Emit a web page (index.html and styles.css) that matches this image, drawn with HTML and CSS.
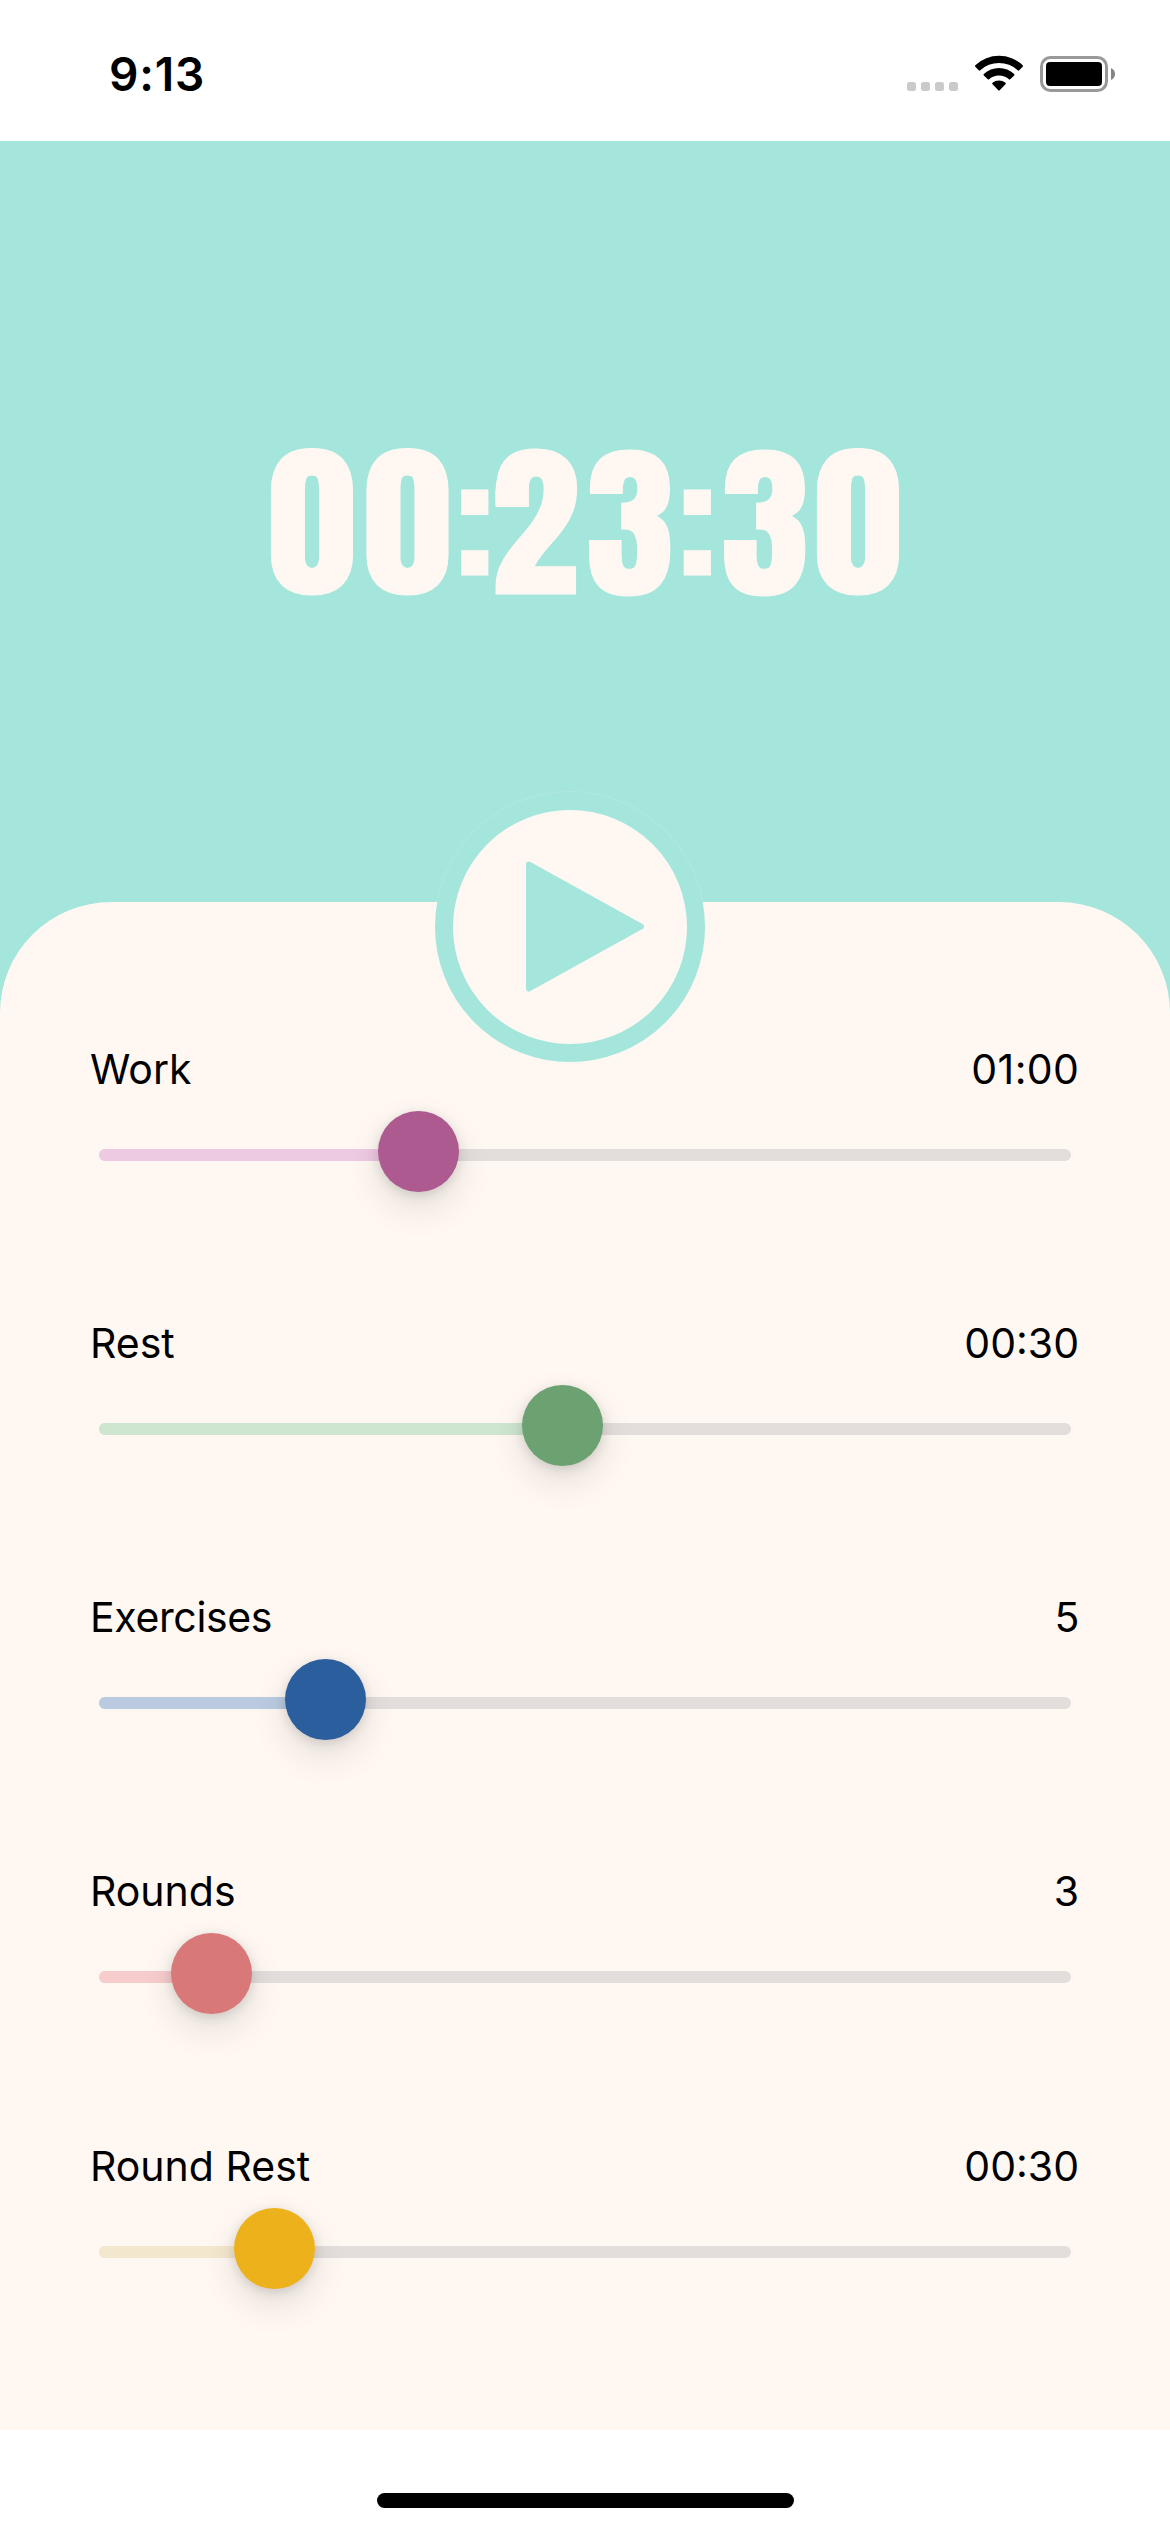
FILE: index.html
```html
<!DOCTYPE html>
<html lang="en">
<head>
<meta charset="utf-8">
<title>Workout timer</title>
<link rel="stylesheet" href="styles.css">
</head>
<body>
<div class="screen">
  <header class="status">
    <span class="clock">9:13</span>
    <svg class="status-icons" width="210" height="40" viewBox="906 54 210 40">
      <g fill="#cacaca"><rect x="907" y="82" width="9" height="9" rx="2.5"/><rect x="921" y="82" width="9" height="9" rx="2.5"/><rect x="935" y="82" width="9" height="9" rx="2.5"/><rect x="949" y="82" width="9" height="9" rx="2.5"/></g>
      <path d="M975.3 65.2Q974.6 66 975.3 66.7L979 70.4Q979.6 71 980.3 70.3A27.500 27.500 0 0 1 1017.700 70.300Q1018.400 71 1019 70.400L1022.700 66.700Q1023.400 66 1022.700 65.200A34.500 34.500 0 0 0 975.300 65.200Z"/>
      <path d="M983.8 74Q983.100 74.700 983.800 75.400L987.800 79.300Q988.400 79.900 989.100 79.300A15 15 0 0 1 1008.900 79.300Q1009.600 79.900 1010.200 79.300L1014.200 75.400Q1014.900 74.700 1014.200 74A22 22 0 0 0 983.800 74Z"/>
      <path d="M992.500 82.800Q991.800 83.500 992.500 84.200L998.300 90.300Q999 91 999.700 90.300L1005.500 84.200Q1006.200 83.500 1005.500 82.800A10 10 0 0 0 992.500 82.800Z"/>
      <rect x="1041.500" y="57.500" width="65" height="33" rx="9" fill="none" stroke="#999" stroke-width="3"/>
      <rect x="1046" y="62" width="56" height="24" rx="4"/>
      <path d="M1111 68Q1115 70 1115 74T1111 80Z" fill="#848484"/>
    </svg>
  </header>
  <main class="timer">
    <div class="total">0<span class="pair-end">0</span><span class="colon before-two">:</span>2<span class="pair-end">3</span><span class="colon">:</span><span class="pair-end">3</span><span class="last">0</span></div>
    <button class="play" aria-label="Start">
      <svg width="234" height="234" viewBox="0 0 234 234"><path d="M76 54.500L188 116.500L76 178.500Z" fill="#a4e6dc" stroke="#a4e6dc" stroke-width="6" stroke-linejoin="round"/></svg>
    </button>
    <section class="settings">
      <div class="setting work"><div class="caption"><span>Work</span><span>01:00</span></div><div class="slider"><div class="fill"></div><div class="knob"></div></div></div>
      <div class="setting rest"><div class="caption"><span>Rest</span><span>00:30</span></div><div class="slider"><div class="fill"></div><div class="knob"></div></div></div>
      <div class="setting exercises"><div class="caption"><span>Exercises</span><span>5</span></div><div class="slider"><div class="fill"></div><div class="knob"></div></div></div>
      <div class="setting rounds"><div class="caption"><span>Rounds</span><span>3</span></div><div class="slider"><div class="fill"></div><div class="knob"></div></div></div>
      <div class="setting round-rest"><div class="caption"><span>Round Rest</span><span>00:30</span></div><div class="slider"><div class="fill"></div><div class="knob"></div></div></div>
    </section>
  </main>
  <footer class="home"><div class="home-bar"></div></footer>
</div>
</body>
</html>
```
FILE: styles.css
```css
* { box-sizing: border-box; }

body {
  margin: 0;
  background: #fff;
  color: #000;
  font-family: Inter, "Liberation Sans", sans-serif;
}

.screen {
  display: flex;
  flex-direction: column;
  width: 1170px;
  height: 2532px;
}

.status {
  display: flex;
  justify-content: space-between;
  flex: none;
  height: 141px;
  padding: 54px 54px 0 109px;
}

.clock {
  font-size: 46px;
  font-weight: 600;
  letter-spacing: .8px;
  line-height: 40px;
}

.timer {
  position: relative;
  display: flex;
  flex-direction: column;
  height: 2289px;
  background: #a4e6dc;
}

.total {
  height: 761px;
  padding-top: 1px;
  color: #fff8f2;
  font-family: Impact, Anton, "Open Sans Condensed", sans-serif;
  font-size: 168px;
  letter-spacing: 7px;
  line-height: 761px;
  text-align: center;
  transform: scaleX(1.06);
  -webkit-text-stroke: 1px #fff8f2;
}

.pair-end { letter-spacing: 4.6px; }
.last { letter-spacing: 0; }

.colon {
  display: inline-block;
  margin-right: -1px;
  letter-spacing: 0;
  transform: scaleX(.84);
  transform-origin: left;
}

.before-two { margin-right: -8px; }

/* The start button straddles the edge of the settings panel. */
.play {
  position: absolute;
  top: 651px;
  left: 435px;
  width: 270px;
  height: 270px;
  padding: 0;
  border: 18px solid #a4e6dc;
  border-radius: 50%;
  background: #fff8f2;
  box-shadow: 0 0 0 1px rgba(255, 248, 242, .15);
}

.play svg { display: block; }

.settings {
  flex: 1;
  padding: 142px 91px 0 90px;
  border-radius: 111px 111px 0 0;
  background: #fff8f2;
}

.setting { height: 274px; }

.caption {
  display: flex;
  justify-content: space-between;
  height: 50px;
  margin-bottom: 17px;
  font-size: 41px;
  line-height: 50px;
}

.slider {
  position: relative;
  display: flex;
  align-items: center;
  height: 81px;
  margin: 0 8px 0 9px;
}

.slider::before {
  position: absolute;
  top: 38px;
  width: 100%;
  height: 12px;
  border-radius: 6px;
  background: #e3dedb;
  content: "";
}

.fill {
  position: relative;
  top: 3.5px;
  width: var(--value);
  height: 12px;
  border-radius: 6px 0 0 6px;
  background: var(--tint);
}

.knob {
  position: relative;
  width: 81px;
  height: 81px;
  margin-left: -40.5px;
  border-radius: 50%;
  background: var(--color);
  box-shadow: 0 15px 36px rgba(0, 0, 0, .11), 0 3px 12px rgba(0, 0, 0, .13);
}

.work { --value: 319.5px; --color: #ad5a91; --tint: #eec9e2; }
.rest { --value: 463.5px; --color: #6ca172; --tint: #cee6d0; }
.exercises { --value: 226.5px; --color: #2a5e9c; --tint: #bacae0; }
.rounds { --value: 112.5px; --color: #d87878; --tint: #f7cccd; }
.round-rest { --value: 175.5px; --color: #edb21b; --tint: #f3e8ce; padding-top: 1px; }

.work .caption span:last-child { letter-spacing: .4px; margin-right: -.4px; }
.exercises .caption { letter-spacing: -.35px; }

.home {
  display: flex;
  justify-content: center;
  height: 102px;
  padding-top: 63px;
}

.home-bar {
  width: 417px;
  height: 15px;
  border-radius: 8px;
  background: #000;
}
```
